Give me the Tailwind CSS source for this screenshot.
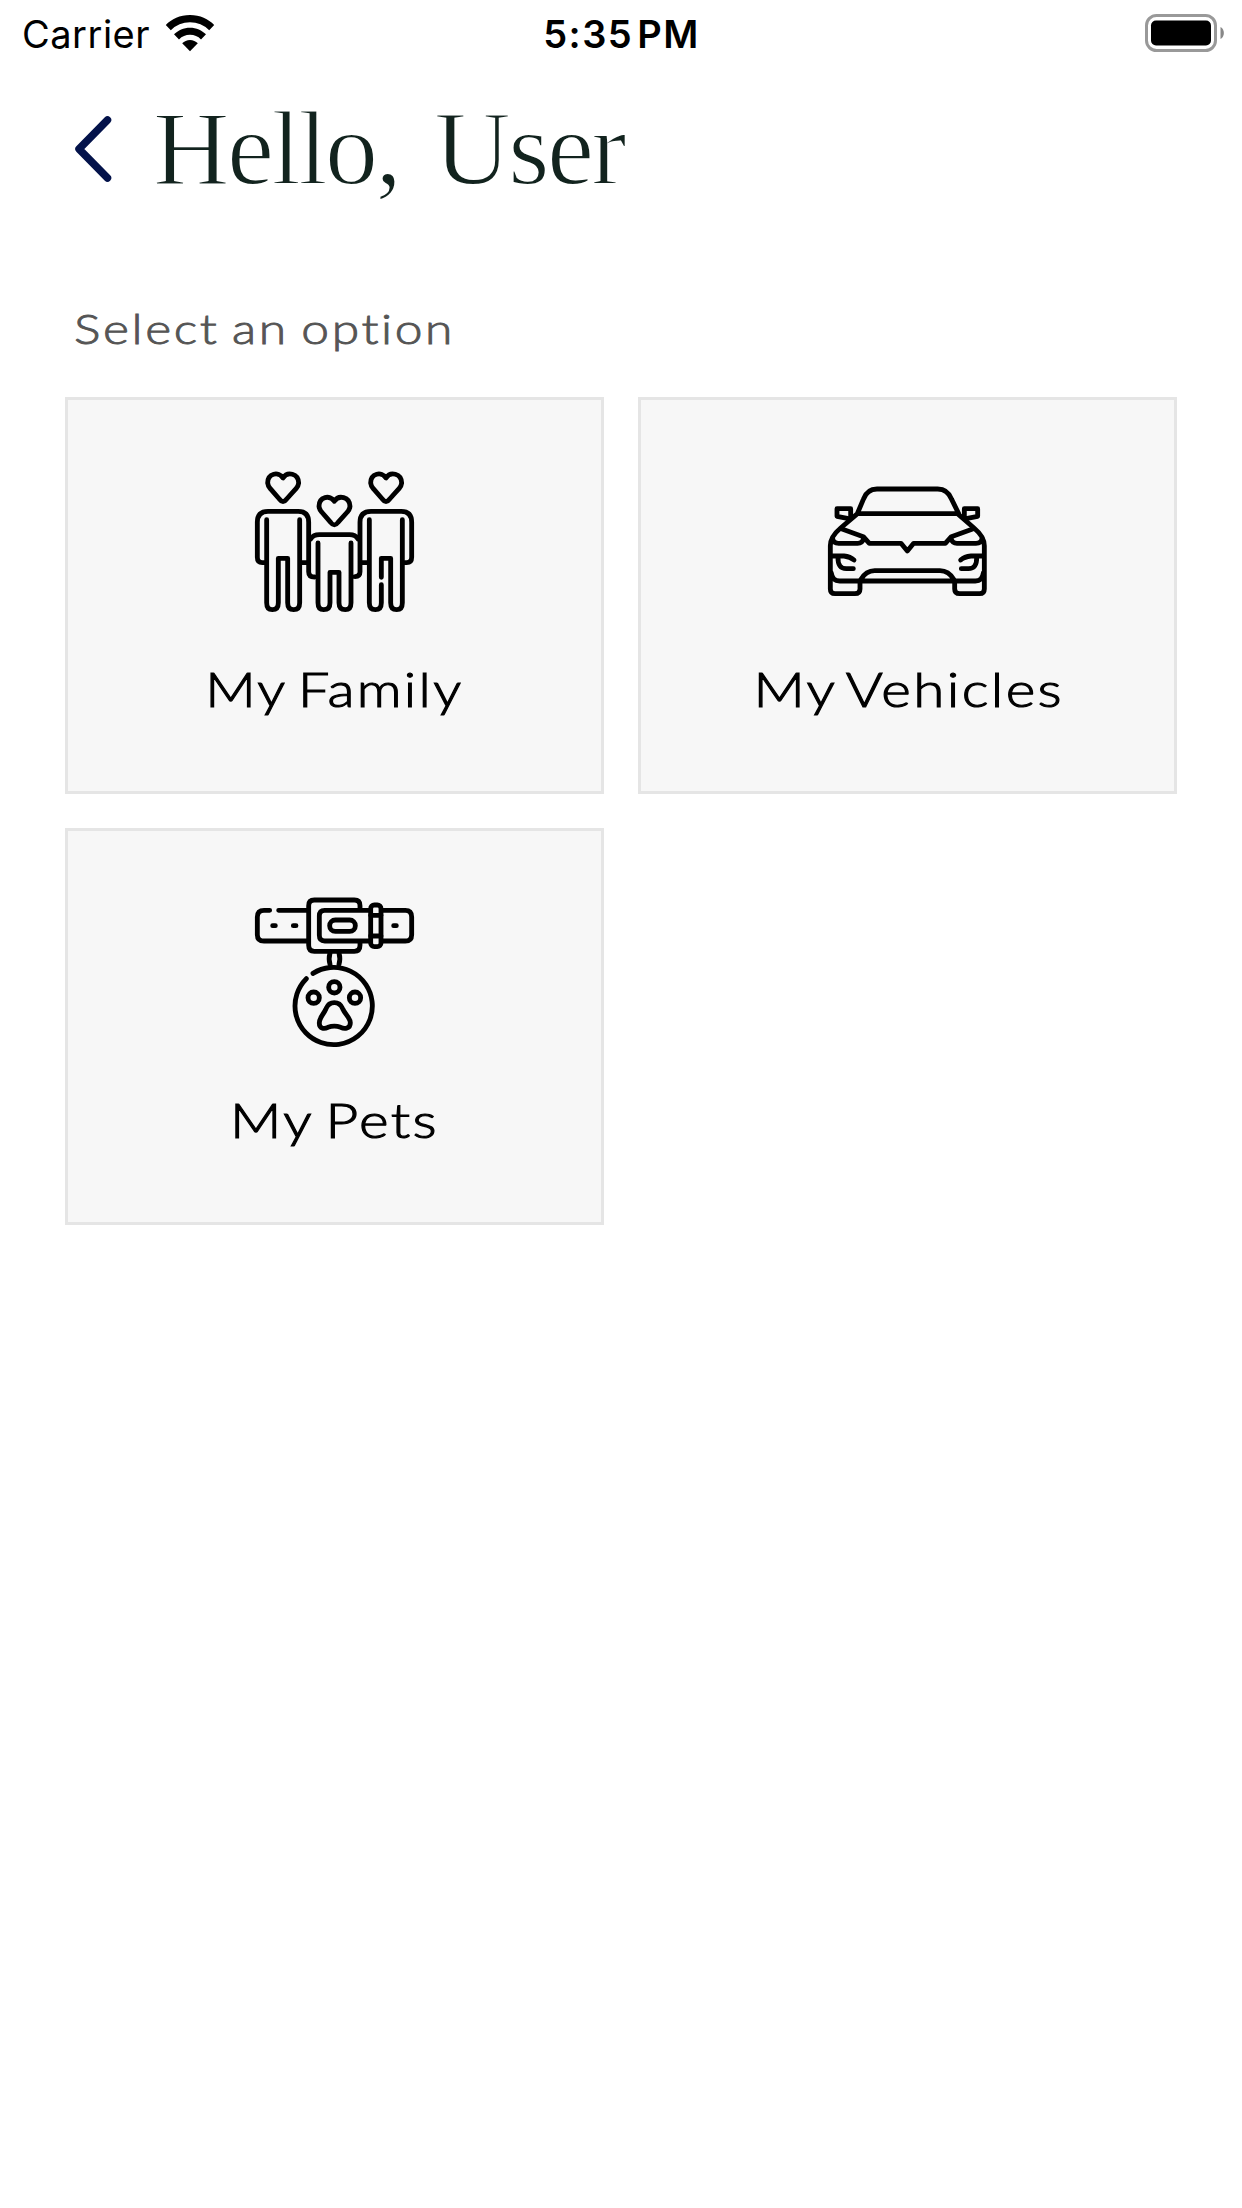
<!DOCTYPE html>
<html lang="en">
<head>
<meta charset="utf-8">
<title>Hello, User</title>
<script src="https://cdn.jsdelivr.net/npm/@tailwindcss/browser@4"></script>
</head>
<body class="bg-white">
<div class="flex h-[2208px] w-[1242px] flex-col overflow-hidden bg-white font-['Lato',sans-serif] text-black">
  <!-- status bar -->
  <header class="grid h-[66px] grid-cols-3 items-center pl-[22px] pr-[17px] font-['Inter',sans-serif] text-[38px] leading-none">
    <div class="flex items-center gap-[15px]">
      <span class="pt-px tracking-[0.5px]">Carrier</span>
      <svg class="h-[38px] w-[50px]" viewBox="0 0 50 38">
        <path d="M25 1C15 1 6.500 5 .8 11L5.800 16.200A27 27 0 0 1 44.200 16.200L49.200 11C43.500 5 35 1 25 1Z"/>
        <path d="M25 13.700C18.700 13.700 13 16.300 9 20.300L14 25.400A15.600 15.600 0 0 1 36 25.400L41 20.300C37 16.300 31.300 13.700 25 13.700Z"/>
        <path d="M25 26C21.900 26 19.200 27.300 17.200 29.300L25 37.200L32.800 29.300C30.800 27.300 28.100 26 25 26Z"/>
      </svg>
    </div>
    <div class="pr-[4px] pt-px text-center font-semibold tracking-[1.5px] [word-spacing:-7px]">5:35 PM</div>
    <svg class="h-[38px] w-[80px] justify-self-end" viewBox="0 0 80 38">
      <rect x="1.500" y="1.500" width="69" height="35" rx="10" fill="none" stroke="#999" stroke-width="3"/>
      <rect x="6" y="6.500" width="60" height="25" rx="5"/>
      <path d="M75.500 13C80 15 80 23 75.500 25Z" fill="#888"/>
    </svg>
  </header>

  <div class="flex h-[164px] items-start pl-[73px] pt-[22px]">
    <svg class="mt-[25px] h-[72px] w-[40px]" viewBox="0 0 40 72" fill="none" stroke="#03124a" stroke-width="7.500" stroke-linecap="round" stroke-linejoin="round"><path d="M34.500 7L6 36L34.500 65"/></svg>
    <h1 class="-mt-px ml-[40px] font-['Liberation_Serif',serif] text-[106px] leading-[124px] tracking-[-2.6px] text-[#12231e] [-webkit-text-stroke:1.8px_white] [word-spacing:11px]">Hello, User</h1>
  </div>

  <p class="ml-[74px] mt-[71px] h-[96px] origin-left scale-x-[1.185] text-[42px] leading-[54px] font-light tracking-[2.2px] text-[#555] [-webkit-text-stroke:0.9px_#555] [word-spacing:-3px]">Select an option</p>

  <main class="grid grid-cols-2 gap-x-[34px] gap-y-[33.500px] px-[65px]">
    <section class="flex h-[397px] flex-col items-center border-[3px] border-[#e5e5e5] bg-[#f7f7f7] pt-[55px]">
      <svg class="h-[170px] w-[190px] shrink-0" viewBox="0 0 570 510" fill="none" stroke="#000" stroke-width="14.500" stroke-linecap="round" stroke-linejoin="round">
        <defs>
          <path id="heart" d="M129 69C116 48 83 55 83 84Q84 94 91 101L118 132Q129 147 140 132L168 101Q175 94 176 84C175 55 142 48 129 69Z"/>
        </defs>
        <use href="#heart"/><use href="#heart" x="154" y="70"/><use href="#heart" x="309"/>
        <path d="M80 194V443Q80 464 97 464Q115 464 115 443V310H143V443Q143 464 161 464Q179 464 179 443V194M74 323H67Q52 323 52 307V202Q52 169 84 169H175Q206 169 206 202V350Q206 366 224 366M185 323H200"/>
        <path d="M234 264V443Q234 464 251 464Q270 464 270 443V352H297V443Q297 464 316 464Q333 464 333 443V264M212 252Q220 239 238 239H329Q346 239 354 252M345 365Q360 364 360 350V202Q360 169 393 169H484Q515 169 515 202V307Q515 323 500 323H494M366 323H382"/>
        <path d="M388 194V443Q388 464 406 464Q424 464 424 443V389M424 367V310H452V443Q452 464 470 464Q487 464 487 443V194"/>
      </svg>
      <span class="mt-[35px] scale-x-[1.160] whitespace-nowrap text-[48px] leading-[58px] font-light tracking-[2px] [-webkit-text-stroke:1.1px_black] [word-spacing:-5px]">My Family</span>
    </section>

    <section class="flex h-[397px] flex-col items-center border-[3px] border-[#e5e5e5] bg-[#f7f7f7] pt-[55px]">
      <svg class="h-[170px] w-[190px] shrink-0" viewBox="-5 -44 570 510" fill="none" stroke="#000" stroke-width="14.500" stroke-linecap="round" stroke-linejoin="round">
        <path d="M128 132L146 89Q157 58 187 58H369Q399 58 411 89L432 132ZM125 135L78 175Q47 201 47 228V358Q47 372 61 372H121Q136 372 136 358V334M432 135L478 175Q509 201 509 228V358Q509 372 495 372H435Q420 372 420 358V334"/>
        <path d="M108 145V117H67V140L98 146M449 145V117H489V140L458 146"/>
        <path d="M82 178L146 201L164 221H259L278 244L297 221H392L410 201L474 178M54 207Q56 221 72 221H129Q143 221 147 206M502 207Q500 221 484 221H427Q413 221 409 206"/>
        <path d="M52 259H88Q107 261 118 271M70 263Q69 297 95 297H116M504 259H469Q449 261 438 271M486 263Q487 297 461 297H440"/>
        <path d="M50 310Q53 334 75 334H482Q503 334 506 310M138 330Q154 303 180 303H376Q402 303 418 330"/>
      </svg>
      <span class="mt-[35px] scale-x-[1.180] whitespace-nowrap pl-[2px] text-[48px] leading-[58px] font-light tracking-[2px] [-webkit-text-stroke:1.1px_black] [word-spacing:-5px]">My Vehicles</span>
    </section>

    <section class="flex h-[397px] flex-col items-center border-[3px] border-[#e5e5e5] bg-[#f7f7f7] pt-[54px]">
      <svg class="h-[170px] w-[190px] shrink-0" viewBox="0 0 570 510" fill="none" stroke="#000" stroke-width="14.500" stroke-linecap="round" stroke-linejoin="round">
        <path d="M89 76H72Q52 76 52 96V149Q52 168 72 168H200M116 76H200M360 70V62Q360 45 343 45H223Q206 45 206 62V181Q206 199 223 199H343Q360 199 360 181V174M386 76H254Q238 76 238 93V151Q238 168 254 168H386M429 76H496Q515 76 515 96V149Q515 168 496 168H429"/>
        <rect x="269" y="105" width="77" height="34" rx="17"/>
        <rect x="392" y="60" width="31" height="125" rx="11"/>
        <path d="M392 91H423M392 153H423M98 122H106M160 122H168M461 122H469M270 204Q265 222 270 238M297 204Q302 222 297 238"/>
        <path d="M219 265A116 116 0 1 1 199 281"/>
        <circle cx="283" cy="307" r="17"/><circle cx="221" cy="338" r="17"/><circle cx="345" cy="338" r="17"/>
        <path d="M258 371C268 347 298 347 308 371C316 389 331 399 331 413C331 431 314 433 302 427Q283 420 264 427C252 433 237 431 238 413C238 399 250 389 258 371Z"/>
      </svg>
      <span class="mt-[36px] scale-x-[1.180] whitespace-nowrap text-[48px] leading-[58px] font-light tracking-[2px] [-webkit-text-stroke:1.1px_black] [word-spacing:-4px]">My Pets</span>
    </section>
  </main>
</div>
</body>
</html>
